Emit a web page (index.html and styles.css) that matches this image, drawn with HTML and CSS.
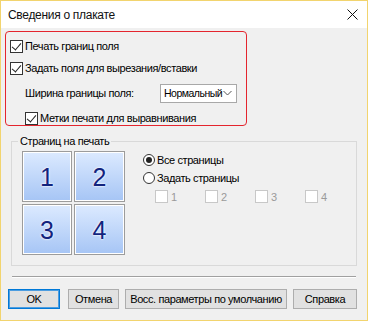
FILE: index.html
```html
<!DOCTYPE html>
<html>
   <head>
      <title>Сведения о плакате</title>
      <link rel="stylesheet" href="styles.css">
   </head>
   <body>
      <div class="window">
         <div class="titlebar">
            <span class="title">Сведения о плакате</span>
            <svg class="close" width="11" height="11" viewBox="0 0 11 11"><path d="M0.5 0.5 L10.5 10.5 M10.5 0.5 L0.5 10.5" stroke="#111" stroke-width="1" fill="none"/></svg>
         </div>
         <div class="content">
            <div class="highlight">
               <label class="check-row"><span class="box checked"></span>Печать границ поля</label>
               <label class="check-row"><span class="box checked"></span>Задать поля для вырезания/вставки</label>
               <div class="width-row">
                  <span>Ширина границы поля:</span>
                  <div class="select">
                     <span class="select-value">Нормальный</span>
                     <svg class="caret" width="9" height="6" viewBox="0 0 9 6"><path d="M0.5 1 L4.5 5 L8.5 1" stroke="#555" fill="none"/></svg>
                  </div>
               </div>
               <label class="check-row indent"><span class="box checked"></span>Метки печати для выравнивания</label>
            </div>
            <fieldset class="group">
               <legend>Страниц на печать</legend>
               <div class="group-body">
                  <div class="tiles">
                     <div class="tile">1</div>
                     <div class="tile">2</div>
                     <div class="tile">3</div>
                     <div class="tile">4</div>
                  </div>
                  <div class="options">
                     <label class="radio-row"><span class="radio on"></span>Все страницы</label>
                     <label class="radio-row"><span class="radio"></span>Задать страницы</label>
                     <div class="page-checks">
                        <span class="page-check"><span class="box off"></span>1</span>
                        <span class="page-check"><span class="box off"></span>2</span>
                        <span class="page-check"><span class="box off"></span>3</span>
                        <span class="page-check"><span class="box off"></span>4</span>
                     </div>
                  </div>
               </div>
            </fieldset>
            <div class="separator"></div>
            <div class="buttons">
               <button class="btn default">OK</button>
               <button class="btn cancel">Отмена</button>
               <button class="btn reset">Восс. параметры по умолчанию</button>
               <button class="btn help">Справка</button>
            </div>
         </div>
      </div>
   </body>
</html>
```
FILE: styles.css
```css
* {
   margin: 0;
   padding: 0;
   box-sizing: border-box;
}
body {
   font-family: 'Liberation Sans', Arial, sans-serif;
   font-size: 11px;
   letter-spacing: -0.4px;
   color: #000;
   background: #fff;
}
.window {
   width: 368px;
   height: 321px;
   border: 1px solid #f2d46e;
   background: #f0f0f0;
   display: flex;
   flex-direction: column;
}
.titlebar {
   height: 27px;
   flex: none;
   background: #fff;
   display: flex;
   align-items: center;
   justify-content: space-between;
   padding: 0 9px 0 7px;
}
.title {
   font-size: 12px;
   letter-spacing: -0.3px;
   color: #111;
}
.content {
   flex: 1;
   padding: 3px 0 0 4px;
}
.highlight {
   width: 242px;
   height: 95px;
   border: 1.5px solid #e4252e;
   border-radius: 4px;
   padding: 3px 0 0 4px;
}
.check-row {
   display: flex;
   align-items: center;
   height: 22px;
   gap: 2px;
}
.check-row.indent {
   padding-left: 15px;
}
.box {
   width: 13px;
   height: 13px;
   border: 1px solid #333;
   background: #fff;
   position: relative;
   flex: none;
}
.box.checked::after {
   content: '';
   position: absolute;
   left: 3px;
   top: 0px;
   width: 4px;
   height: 8px;
   border: solid #222;
   border-width: 0 1.3px 1.3px 0;
   transform: rotate(40deg);
}
.box.off {
   border-color: #c8c8c8;
}
.width-row {
   display: flex;
   align-items: center;
   height: 26px;
   padding-left: 15px;
   margin: 1px 0;
}
.width-row > span {
   width: 135px;
}
.select {
   width: 77px;
   height: 19px;
   background: #fff;
   border: 1px solid #a8a8a8;
   display: flex;
   align-items: center;
   justify-content: space-between;
   padding: 0 4px 0 3px;
}
.select-value {
   font-size: 10.5px;
   letter-spacing: -0.5px;
   white-space: nowrap;
}
.caret {
   flex: none;
}
.group {
   margin: 9px 0 0 6px;
   width: 346px;
   height: 131px;
   border: 1px solid #d9d9d9;
   padding: 0 0 0 10px;
}
.group legend {
   padding: 0 2px;
   margin-left: -4px;
   line-height: 12px;
}
.group-body {
   display: flex;
   gap: 18px;
   padding-top: 4px;
}
.tiles {
   display: grid;
   grid-template-columns: 50px 51px;
   grid-template-rows: 51px 51px;
   gap: 2px;
}
.tile {
   border: 1px solid #9c9c9c;
   box-shadow: inset 0 0 0 1px #fff;
   background: linear-gradient(#dceaff, #a6c5f5);
   display: flex;
   align-items: center;
   justify-content: center;
   font-size: 25px;
   letter-spacing: 0;
   color: #12247e;
   text-shadow: 0 0 2px #fff, 0 0 2px #fff;
   padding-top: 2px;
}
.options {
   display: flex;
   flex-direction: column;
}
.radio-row {
   display: flex;
   align-items: center;
   height: 18px;
   gap: 2px;
}
.radio {
   width: 12px;
   height: 12px;
   border-radius: 50%;
   border: 1px solid #333;
   background: #fff;
   position: relative;
}
.radio.on::after {
   content: '';
   position: absolute;
   left: 2px;
   top: 2px;
   width: 6px;
   height: 6px;
   border-radius: 50%;
   background: #222;
}
.page-checks {
   display: flex;
   padding-left: 12px;
   margin-top: 3px;
}
.page-check {
   display: flex;
   align-items: center;
   gap: 3px;
   width: 50px;
   color: #9a9a9a;
}
.separator {
   margin: 10px 0 0 7px;
   width: 344px;
   border-top: 1px solid #a0a0a0;
   border-bottom: 1px solid #fff;
}
.buttons {
   display: flex;
   margin: 11px 0 0 3px;
}
.btn {
   height: 20px;
   font-family: 'Liberation Sans', Arial, sans-serif;
   font-size: 11px;
   letter-spacing: -0.4px;
   white-space: nowrap;
   background: #e1e1e1;
   border: 1px solid #adadad;
}
.btn.default {
   width: 52px;
   border: 1px solid #0078d7;
   box-shadow: inset 0 0 0 1px #4d9de0;
}
.btn.cancel {
   width: 51px;
   margin-left: 8px;
}
.btn.reset {
   width: 162px;
   margin-left: 6px;
}
.btn.help {
   width: 64px;
   margin-left: 6px;
}
```
